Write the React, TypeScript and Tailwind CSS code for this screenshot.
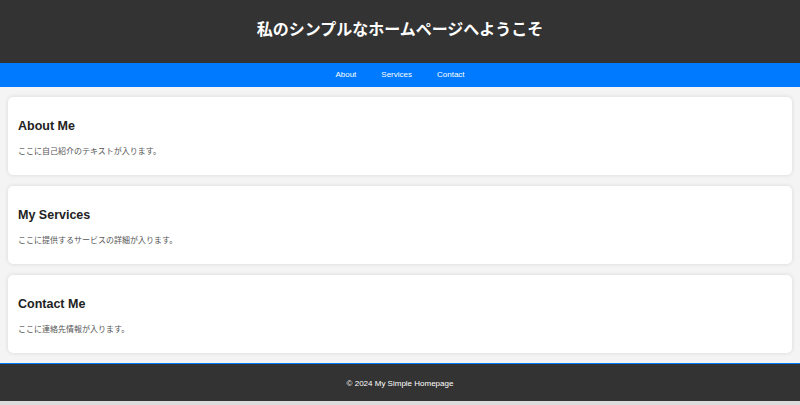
import React from "react";

const font = { fontFamily: '"Liberation Sans", "Noto Sans CJK JP", sans-serif' };

function Card({ title, text }: { title: string; text: string }) {
  return (
    <section className="bg-white rounded-[5px] shadow-[0_0_4px_rgba(0,0,0,0.12)] h-[78px] px-[10px] pt-[22px]">
      <h2 className="text-[12.5px] font-bold text-[#222] leading-[14px]">{title}</h2>
      <p className="mt-[13px] text-[8px] text-[#555] leading-[12px]">{text}</p>
    </section>
  );
}

export default function App() {
  return (
    <div className="w-[800px] h-[405px] bg-[#f4f4f4] flex flex-col overflow-hidden" style={font}>
      <header className="h-[63px] bg-[#333] flex items-center justify-center pb-[4px]">
        <h1 className="text-white font-bold text-[16px] leading-[20px]">私のシンプルなホームページへようこそ</h1>
      </header>
      <nav className="h-[24px] bg-[#007bff] flex items-center justify-center gap-[25px] text-white text-[8px]">
        <span>About</span>
        <span>Services</span>
        <span>Contact</span>
      </nav>
      <main className="flex flex-col gap-[11px] px-[8px] pt-[10px] pb-[10px]">
        <Card title="About Me" text="ここに自己紹介のテキストが入ります。" />
        <Card title="My Services" text="ここに提供するサービスの詳細が入ります。" />
        <Card title="Contact Me" text="ここに連絡先情報が入ります。" />
      </main>
      <footer className="h-[38px] bg-[#333] border-t border-[#007bff] flex items-center justify-center text-white text-[8px] pt-[2px]">
        © 2024 My Simple Homepage
      </footer>
      <div className="flex-1 bg-[#dcdcdc]" />
    </div>
  );
}
